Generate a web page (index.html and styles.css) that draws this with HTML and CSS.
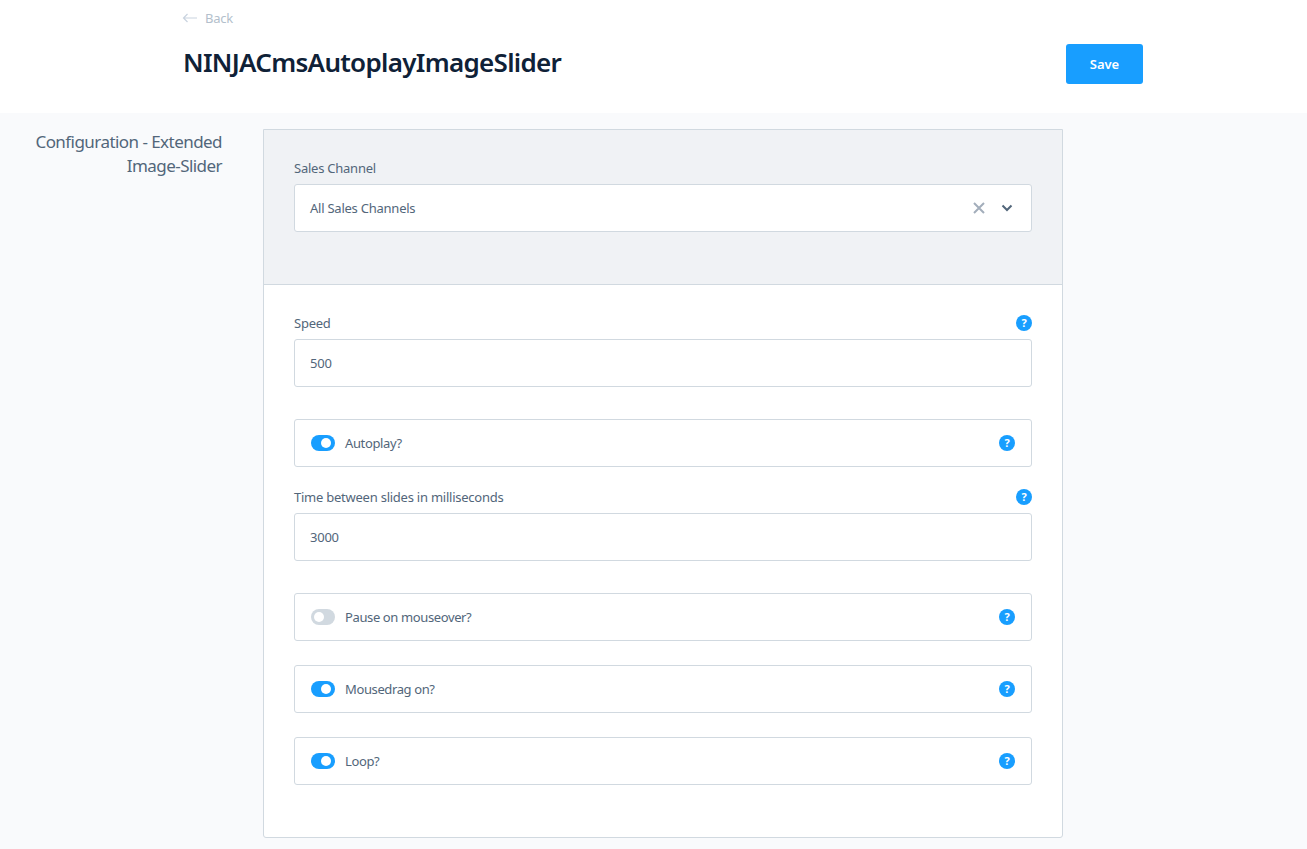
FILE: index.html
```html
<!DOCTYPE html>
<html lang="en">
<head>
    <meta charset="UTF-8">
    <meta name="viewport" content="width=device-width, initial-scale=1.0">
    <title>NINJACmsAutoplayImageSlider</title>
    <link rel="stylesheet" href="styles.css">
</head>
<body>
    <header class="top">
        <div class="top-inner">
            <a class="back" href="#">
                <svg class="back-icon" width="16" height="10" viewBox="0 0 16 10"><path d="M15 5H1.5M5.5 1 1.5 5l4 4" fill="none" stroke="#c9d3df" stroke-width="1.2"/></svg>
                Back
            </a>
            <div class="title-row">
                <h1>NINJACmsAutoplayImageSlider</h1>
                <button class="save">Save</button>
            </div>
        </div>
    </header>
    <main class="page">
        <h2 class="side-title">Configuration - Extended Image-Slider</h2>
        <div class="card">
            <section class="channel">
                <label class="label">Sales Channel</label>
                <div class="input select">
                    <span class="grow">All Sales Channels</span>
                    <svg class="clear" width="12" height="12" viewBox="0 0 12 12"><path d="M1 1l10 10M11 1 1 11" stroke="#a3aebb" stroke-width="2" fill="none"/></svg>
                    <svg class="arrow" width="12" height="8" viewBox="0 0 12 8"><path d="M1.5 1.5 6 6l4.5-4.5" stroke="#52667a" stroke-width="2" fill="none"/></svg>
                </div>
            </section>
            <section class="fields">
                <div class="field">
                    <div class="label-row">
                        <label class="label">Speed</label>
                        <span class="help">?</span>
                    </div>
                    <div class="input">500</div>
                </div>
                <div class="switch-box after-short">
                    <span class="switch on"></span>
                    <span class="grow">Autoplay?</span>
                    <span class="help">?</span>
                </div>
                <div class="field">
                    <div class="label-row">
                        <label class="label">Time between slides in milliseconds</label>
                        <span class="help">?</span>
                    </div>
                    <div class="input">3000</div>
                </div>
                <div class="switch-box">
                    <span class="switch"></span>
                    <span class="grow">Pause on mouseover?</span>
                    <span class="help">?</span>
                </div>
                <div class="switch-box">
                    <span class="switch on"></span>
                    <span class="grow">Mousedrag on?</span>
                    <span class="help">?</span>
                </div>
                <div class="switch-box last">
                    <span class="switch on"></span>
                    <span class="grow">Loop?</span>
                    <span class="help">?</span>
                </div>
            </section>
        </div>
    </main>
</body>
</html>
```

FILE: styles.css
```css
* {
    box-sizing: border-box;
}
body {
    margin: 0;
    background-color: #f9fafc;
    color: #52667a;
    font-family: "Noto Sans", sans-serif;
    font-size: 13px;
    letter-spacing: -0.24px;
}
.top {
    height: 113px;
    background-color: #fff;
}
.top-inner {
    width: 960px;
    margin-left: 183px;
}
.back {
    display: flex;
    align-items: center;
    gap: 7px;
    height: 36px;
    color: #b3bfcc;
    text-decoration: none;
}
.back-icon {
    margin-left: -1px;
}
.title-row {
    display: flex;
    justify-content: space-between;
    height: 40px;
    margin-top: 8px;
}
h1 {
    margin: 0;
    color: #0f2137;
    font-size: 26px;
    font-weight: 600;
    line-height: 36px;
    letter-spacing: -0.7px;
}
.save {
    width: 77px;
    height: 40px;
    border: 0;
    border-radius: 3px;
    background-color: #189eff;
    color: #fff;
    font-family: inherit;
    font-size: 13px;
    font-weight: 600;
}
.page {
    display: flex;
    align-items: flex-start;
    padding: 16px 0 11px;
}
.side-title {
    width: 222px;
    margin: 1px 41px 0 0;
    padding-left: 30px;
    font-size: 17px;
    font-weight: 400;
    line-height: 24px;
    text-align: right;
    letter-spacing: -0.55px;
}
.card {
    width: 800px;
    border: 1px solid #d1d9e0;
    border-radius: 0 0 3px 3px;
    background-color: #fff;
}
.channel {
    height: 155px;
    padding: 30px 30px 0;
    border-bottom: 1px solid #d1d9e0;
    background-color: #f0f2f5;
}
.fields {
    padding: 30px 30px 52px;
}
.label {
    display: block;
    height: 16px;
    margin-bottom: 8px;
    line-height: 16px;
}
.label-row {
    display: flex;
    justify-content: space-between;
    height: 24px;
}
.input,
.switch-box {
    display: flex;
    align-items: center;
    height: 48px;
    padding: 0 16px 0 15px;
    border: 1px solid #d1d9e0;
    border-radius: 3px;
    background-color: #fff;
}
.field {
    margin-bottom: 32px;
}
.switch-box {
    margin-bottom: 24px;
    letter-spacing: -0.38px;
}
.after-short {
    margin-bottom: 22px;
}
.last {
    margin-bottom: 0;
}
.grow {
    flex: 1;
}
.clear {
    margin-right: 16px;
}
.arrow {
    margin-right: 2px;
}
.switch {
    position: relative;
    width: 24px;
    height: 16px;
    margin: 0 10px 0 1px;
    border-radius: 8px;
    background-color: #d1d9e0;
}
.switch::after {
    content: "";
    position: absolute;
    top: 3px;
    left: 3px;
    width: 10px;
    height: 10px;
    border-radius: 50%;
    background-color: #fff;
}
.switch.on {
    background-color: #189eff;
}
.switch.on::after {
    left: 10px;
}
.help {
    width: 16px;
    height: 16px;
    border-radius: 50%;
    background-color: #189eff;
    color: #fff;
    font-size: 11px;
    font-weight: 700;
    line-height: 16px;
    text-align: center;
}
```
